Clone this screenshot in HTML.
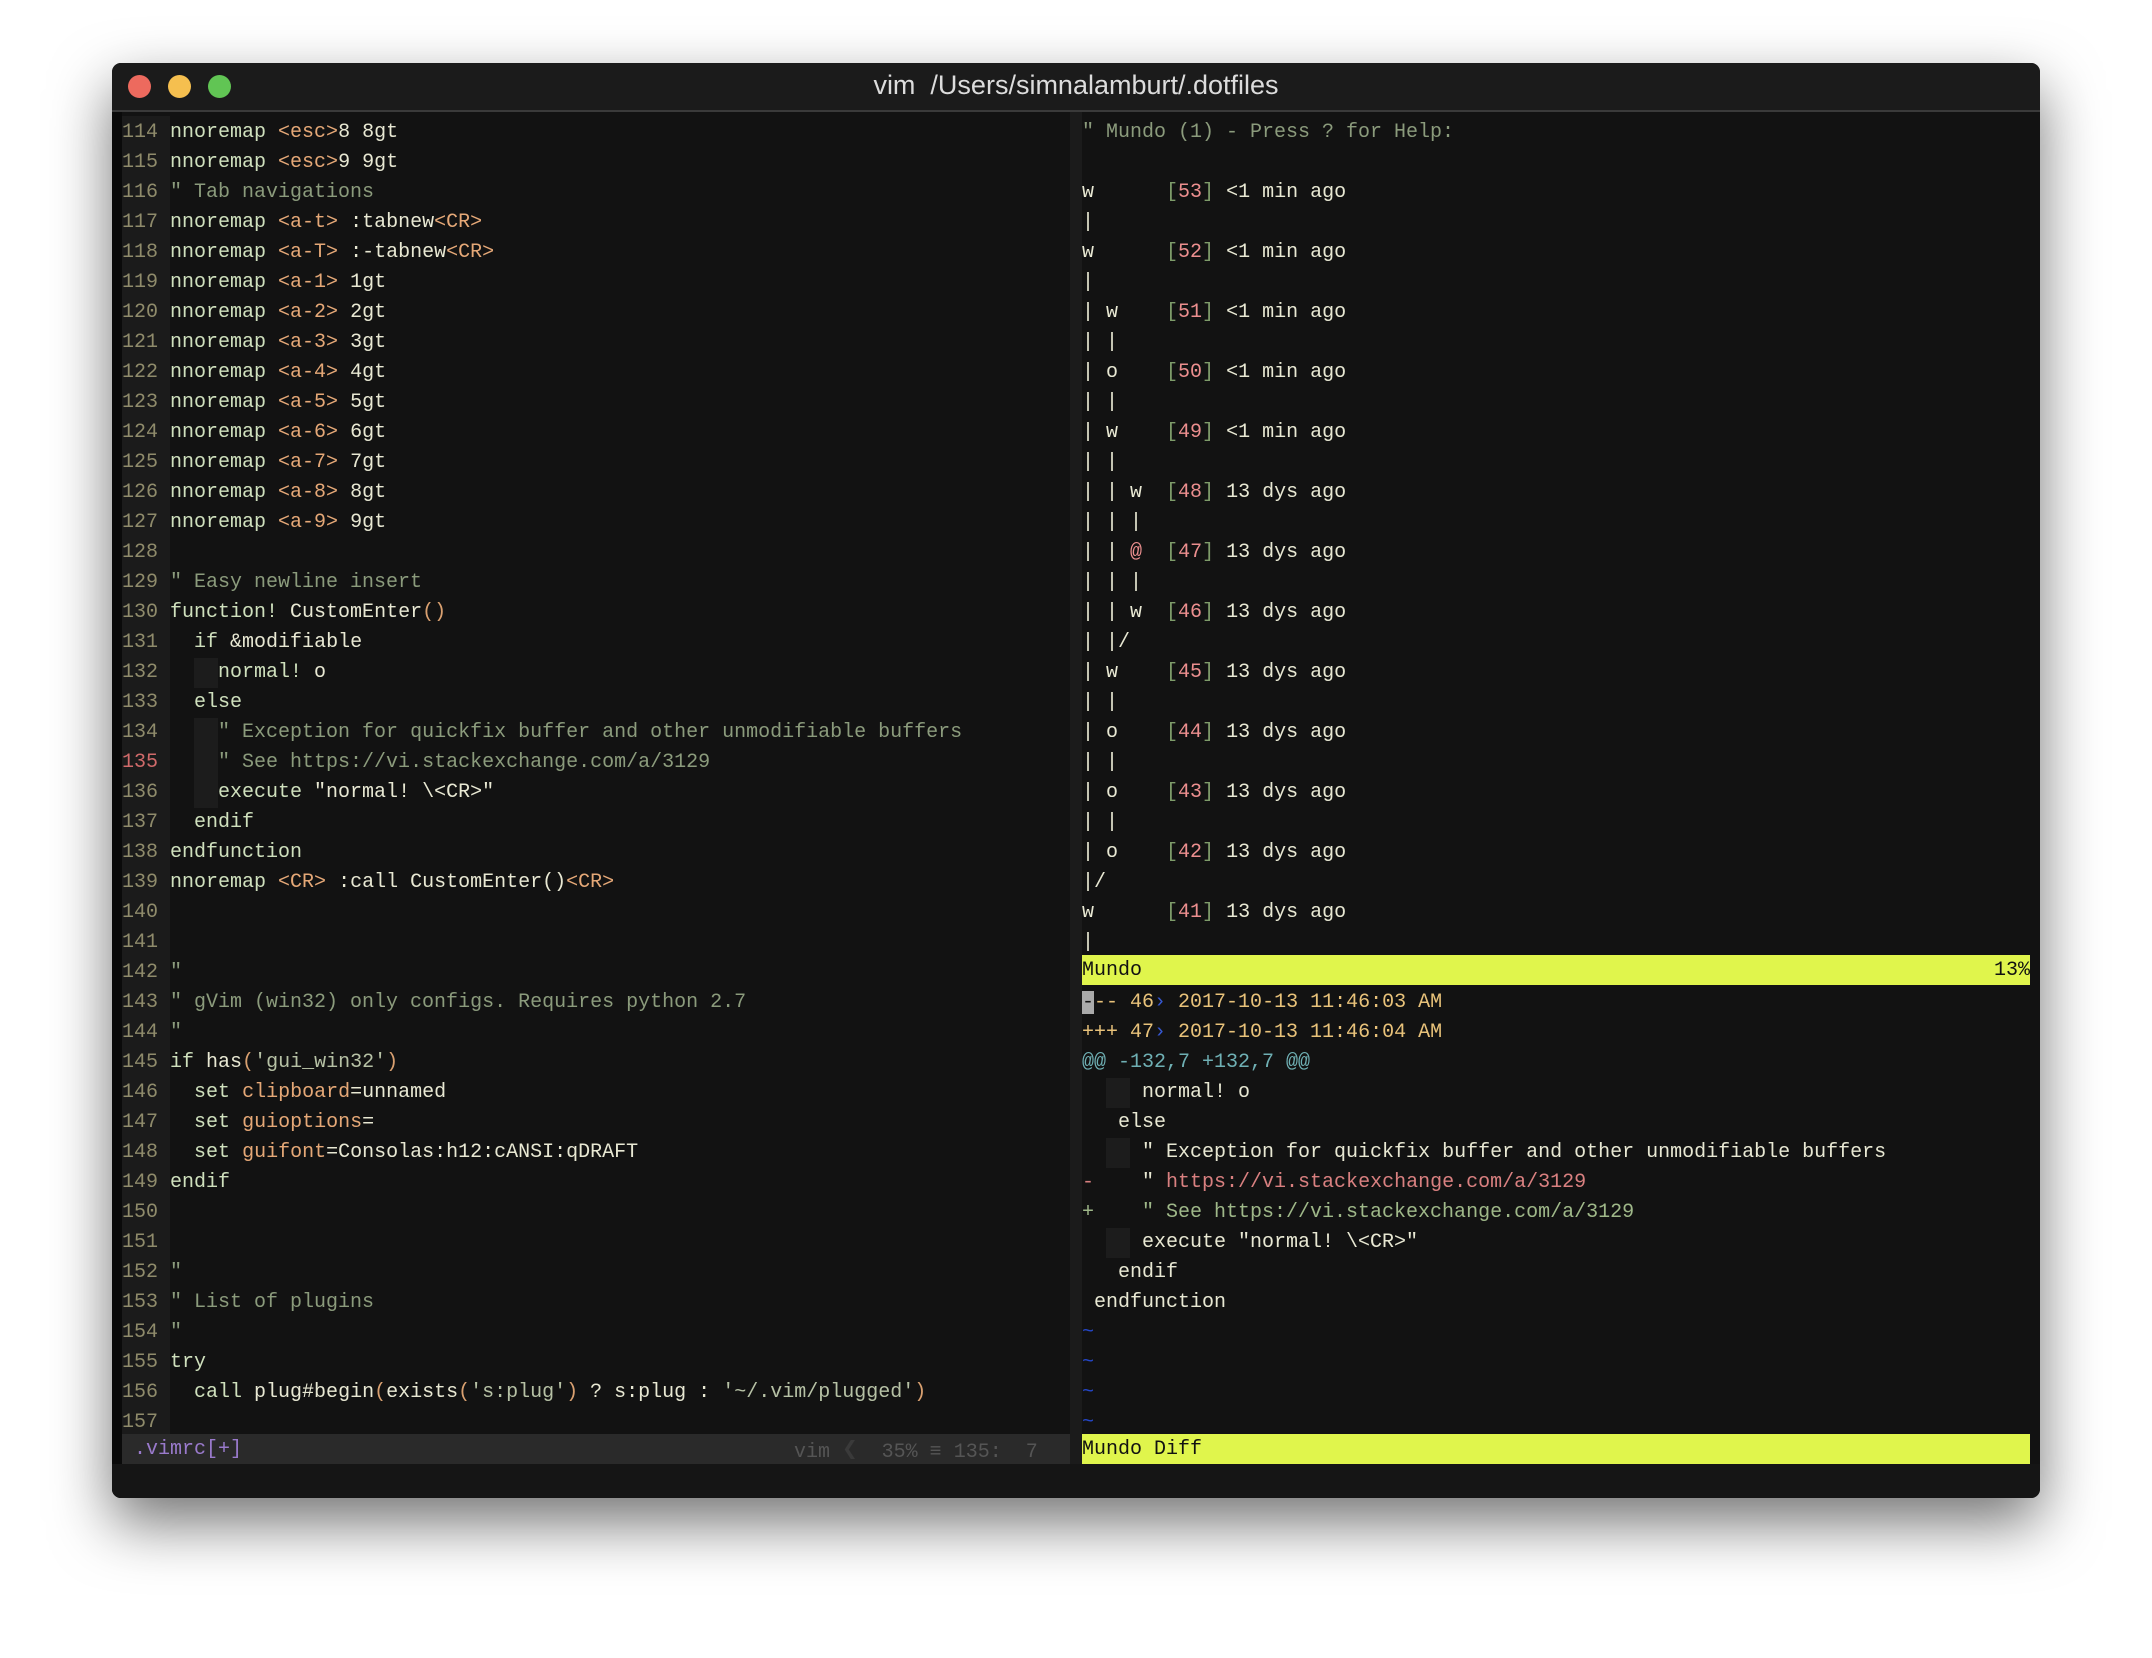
<!DOCTYPE html>
<html><head><meta charset="utf-8"><style>
html,body{margin:0;padding:0;background:#fff;width:2152px;height:1658px;overflow:hidden}
#win{position:absolute;left:112px;top:63px;width:1928px;height:1435px;background:#121212;border-radius:9px;box-shadow:0 25px 60px rgba(0,0,0,.55);overflow:hidden}
#tb{position:absolute;left:0;top:0;width:100%;height:47px;background:#1b1b1b;border-bottom:2px solid #3a3a3a}
.dot{position:absolute;top:12px;width:23px;height:23px;border-radius:50%}
#title{position:absolute;left:0;right:0;top:7px;text-align:center;color:#dcdcdc;font:27px "Liberation Sans",sans-serif}
.code{position:absolute;font-family:"Liberation Mono",monospace;font-size:20px;line-height:30px;white-space:pre;color:#e8e8d3}
.r{position:absolute;height:30px;left:0}
.n{color:#8f8b6b}.k{color:#cfe0bd}.o{color:#e5a877}.c{color:#8b9b7c}.s{color:#b6c1a5}.p{color:#d9a070}
.g{color:#7e9c6a}.num{color:#ec8f8f}.y{color:#e8c27a}.b{color:#3557d0}.t{color:#6fb0b4}.m{color:#d98080}.pl{color:#9fb889}.tl{color:#2446c8}
.blk{display:inline-block;width:24px;height:30px;background:#1c1c1c;vertical-align:top}
</style></head><body>
<div id="win">
<div id="tb">
<div class="dot" style="left:16px;background:#ed6a5e"></div>
<div class="dot" style="left:56px;background:#f5bf4f"></div>
<div class="dot" style="left:96px;background:#61c554"></div>
<div id="title">vim &nbsp;/Users/simnalamburt/.dotfiles</div>
</div>
<div style="position:absolute;left:0;top:49px;width:10px;height:1386px;background:#0a0a0a"></div>
<div style="position:absolute;left:10px;top:53px;width:48px;height:1318px;background:#1b1b1b"></div>
<div style="position:absolute;left:958px;top:49px;width:12px;height:1352px;background:#1b1b1b"></div>
<div style="position:absolute;left:10px;top:1371px;width:948px;height:30px;background:#2a2a2a"></div>
<div style="position:absolute;left:0;top:1401px;width:100%;height:34px;background:#151515"></div>
<div style="position:absolute;left:970px;top:892px;width:948px;height:30px;background:#e0f54c"></div>
<div style="position:absolute;left:970px;top:1371px;width:948px;height:30px;background:#e0f54c"></div>

<div class="code" style="left:10px;top:55px;width:948px">
<div class="r" style="top:0"><span class="n">114 </span><span class="k">nnoremap</span> <span class="o">&lt;esc&gt;</span>8 8gt</div>
<div class="r" style="top:30px"><span class="n">115 </span><span class="k">nnoremap</span> <span class="o">&lt;esc&gt;</span>9 9gt</div>
<div class="r" style="top:60px"><span class="n">116 </span><span class="c">" Tab navigations</span></div>
<div class="r" style="top:90px"><span class="n">117 </span><span class="k">nnoremap</span> <span class="o">&lt;a-t&gt;</span> :tabnew<span class="o">&lt;CR&gt;</span></div>
<div class="r" style="top:120px"><span class="n">118 </span><span class="k">nnoremap</span> <span class="o">&lt;a-T&gt;</span> :-tabnew<span class="o">&lt;CR&gt;</span></div>
<div class="r" style="top:150px"><span class="n">119 </span><span class="k">nnoremap</span> <span class="o">&lt;a-1&gt;</span> 1gt</div>
<div class="r" style="top:180px"><span class="n">120 </span><span class="k">nnoremap</span> <span class="o">&lt;a-2&gt;</span> 2gt</div>
<div class="r" style="top:210px"><span class="n">121 </span><span class="k">nnoremap</span> <span class="o">&lt;a-3&gt;</span> 3gt</div>
<div class="r" style="top:240px"><span class="n">122 </span><span class="k">nnoremap</span> <span class="o">&lt;a-4&gt;</span> 4gt</div>
<div class="r" style="top:270px"><span class="n">123 </span><span class="k">nnoremap</span> <span class="o">&lt;a-5&gt;</span> 5gt</div>
<div class="r" style="top:300px"><span class="n">124 </span><span class="k">nnoremap</span> <span class="o">&lt;a-6&gt;</span> 6gt</div>
<div class="r" style="top:330px"><span class="n">125 </span><span class="k">nnoremap</span> <span class="o">&lt;a-7&gt;</span> 7gt</div>
<div class="r" style="top:360px"><span class="n">126 </span><span class="k">nnoremap</span> <span class="o">&lt;a-8&gt;</span> 8gt</div>
<div class="r" style="top:390px"><span class="n">127 </span><span class="k">nnoremap</span> <span class="o">&lt;a-9&gt;</span> 9gt</div>
<div class="r" style="top:420px"><span class="n">128 </span></div>
<div class="r" style="top:450px"><span class="n">129 </span><span class="c">" Easy newline insert</span></div>
<div class="r" style="top:480px"><span class="n">130 </span><span class="k">function!</span> CustomEnter<span class="p">()</span></div>
<div class="r" style="top:510px"><span class="n">131 </span>  <span class="k">if</span> &amp;modifiable</div>
<div class="r" style="top:540px"><span class="n">132 </span>  <span class="blk"></span><span class="k">normal!</span> o</div>
<div class="r" style="top:570px"><span class="n">133 </span>  <span class="k">else</span></div>
<div class="r" style="top:600px"><span class="n">134 </span>  <span class="blk"></span><span class="c">" Exception for quickfix buffer and other unmodifiable buffers</span></div>
<div class="r" style="top:630px"><span class="n" style="color:#d06a6a">135 </span>  <span class="blk"></span><span class="c">" See https://vi.stackexchange.com/a/3129</span></div>
<div class="r" style="top:660px"><span class="n">136 </span>  <span class="blk"></span><span class="k">execute</span> "normal! \&lt;CR&gt;"</div>
<div class="r" style="top:690px"><span class="n">137 </span>  <span class="k">endif</span></div>
<div class="r" style="top:720px"><span class="n">138 </span><span class="k">endfunction</span></div>
<div class="r" style="top:750px"><span class="n">139 </span><span class="k">nnoremap</span> <span class="o">&lt;CR&gt;</span> :call CustomEnter()<span class="o">&lt;CR&gt;</span></div>
<div class="r" style="top:780px"><span class="n">140 </span></div>
<div class="r" style="top:810px"><span class="n">141 </span></div>
<div class="r" style="top:840px"><span class="n">142 </span><span class="c">"</span></div>
<div class="r" style="top:870px"><span class="n">143 </span><span class="c">" gVim (win32) only configs. Requires python 2.7</span></div>
<div class="r" style="top:900px"><span class="n">144 </span><span class="c">"</span></div>
<div class="r" style="top:930px"><span class="n">145 </span><span class="k">if</span> has<span class="p">(</span><span class="s">'gui_win32'</span><span class="p">)</span></div>
<div class="r" style="top:960px"><span class="n">146 </span>  <span class="k">set</span> <span class="o">clipboard</span>=unnamed</div>
<div class="r" style="top:990px"><span class="n">147 </span>  <span class="k">set</span> <span class="o">guioptions</span>=</div>
<div class="r" style="top:1020px"><span class="n">148 </span>  <span class="k">set</span> <span class="o">guifont</span>=Consolas:h12:cANSI:qDRAFT</div>
<div class="r" style="top:1050px"><span class="n">149 </span><span class="k">endif</span></div>
<div class="r" style="top:1080px"><span class="n">150 </span></div>
<div class="r" style="top:1110px"><span class="n">151 </span></div>
<div class="r" style="top:1140px"><span class="n">152 </span><span class="c">"</span></div>
<div class="r" style="top:1170px"><span class="n">153 </span><span class="c">" List of plugins</span></div>
<div class="r" style="top:1200px"><span class="n">154 </span><span class="c">"</span></div>
<div class="r" style="top:1230px"><span class="n">155 </span><span class="k">try</span></div>
<div class="r" style="top:1260px"><span class="n">156 </span>  <span class="k">call</span> plug#begin<span class="p">(</span>exists<span class="p">(</span><span class="s">'s:plug'</span><span class="p">)</span> ? s:plug : <span class="s">'~/.vim/plugged'</span><span class="p">)</span></div>
<div class="r" style="top:1290px"><span class="n">157 </span></div>
<div class="r" style="top:1317px;color:#9a7acc"> .vimrc[+]</div>
<div class="r" style="top:1317px;left:672px;color:#555">vim <span style="color:#3a3a3a;font-size:26px">❮</span>  35% ≡ 135:  7</div>
</div>

<div class="code" style="left:970px;top:55px;width:948px">
<div class="r" style="top:0"><span class="c">" Mundo (1) - Press ? for Help:</span></div>
<div class="r" style="top:60px">w      <span class="g">[</span><span class="num">53</span><span class="g">]</span> &lt;1 min ago</div>
<div class="r" style="top:90px">|</div>
<div class="r" style="top:120px">w      <span class="g">[</span><span class="num">52</span><span class="g">]</span> &lt;1 min ago</div>
<div class="r" style="top:150px">|</div>
<div class="r" style="top:180px">| w    <span class="g">[</span><span class="num">51</span><span class="g">]</span> &lt;1 min ago</div>
<div class="r" style="top:210px">| |</div>
<div class="r" style="top:240px">| o    <span class="g">[</span><span class="num">50</span><span class="g">]</span> &lt;1 min ago</div>
<div class="r" style="top:270px">| |</div>
<div class="r" style="top:300px">| w    <span class="g">[</span><span class="num">49</span><span class="g">]</span> &lt;1 min ago</div>
<div class="r" style="top:330px">| |</div>
<div class="r" style="top:360px">| | w  <span class="g">[</span><span class="num">48</span><span class="g">]</span> 13 dys ago</div>
<div class="r" style="top:390px">| | |</div>
<div class="r" style="top:420px">| | <span class="num">@</span>  <span class="g">[</span><span class="num">47</span><span class="g">]</span> 13 dys ago</div>
<div class="r" style="top:450px">| | |</div>
<div class="r" style="top:480px">| | w  <span class="g">[</span><span class="num">46</span><span class="g">]</span> 13 dys ago</div>
<div class="r" style="top:510px">| |/</div>
<div class="r" style="top:540px">| w    <span class="g">[</span><span class="num">45</span><span class="g">]</span> 13 dys ago</div>
<div class="r" style="top:570px">| |</div>
<div class="r" style="top:600px">| o    <span class="g">[</span><span class="num">44</span><span class="g">]</span> 13 dys ago</div>
<div class="r" style="top:630px">| |</div>
<div class="r" style="top:660px">| o    <span class="g">[</span><span class="num">43</span><span class="g">]</span> 13 dys ago</div>
<div class="r" style="top:690px">| |</div>
<div class="r" style="top:720px">| o    <span class="g">[</span><span class="num">42</span><span class="g">]</span> 13 dys ago</div>
<div class="r" style="top:750px">|/</div>
<div class="r" style="top:780px">w      <span class="g">[</span><span class="num">41</span><span class="g">]</span> 13 dys ago</div>
<div class="r" style="top:810px">|</div>
<div class="r" style="top:838px;width:948px;color:#111">Mundo<span style="position:absolute;right:0">13%</span></div>
<div class="r" style="top:870px" ><span class="y"><span style="background:#aaa;color:#111">-</span>-- 46<span class="b">›</span> 2017-10-13 11:46:03 AM</span></div>
<div class="r" style="top:900px"><span class="y">+++ 47<span class="b">›</span> 2017-10-13 11:46:04 AM</span></div>
<div class="r" style="top:930px"><span class="t">@@ -132,7 +132,7 @@</span></div>
<div class="r" style="top:960px">  <span class="blk"></span> normal! o</div>
<div class="r" style="top:990px">   else</div>
<div class="r" style="top:1020px">  <span class="blk"></span> " Exception for quickfix buffer and other unmodifiable buffers</div>
<div class="r" style="top:1050px"><span class="m">-</span>    " <span class="m">https://vi.stackexchange.com/a/3129</span></div>
<div class="r" style="top:1080px"><span class="pl">+    " See https://vi.stackexchange.com/a/3129</span></div>
<div class="r" style="top:1110px">  <span class="blk"></span> execute "normal! \&lt;CR&gt;"</div>
<div class="r" style="top:1140px">   endif</div>
<div class="r" style="top:1170px"> endfunction</div>
<div class="r tl" style="top:1200px">~</div>
<div class="r tl" style="top:1230px">~</div>
<div class="r tl" style="top:1260px">~</div>
<div class="r tl" style="top:1290px">~</div>
<div class="r" style="top:1317px;color:#111">Mundo Diff</div>
</div>
</div>
</body></html>
